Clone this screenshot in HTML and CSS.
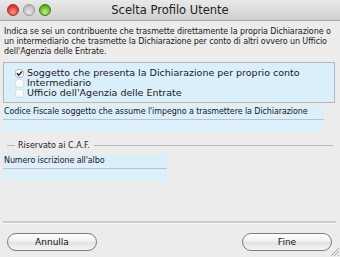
FILE: index.html
```html
<!DOCTYPE html>
<html>
<head>
<meta charset="utf-8">
<link rel="stylesheet" href="styles.css">
</head>
<body>
<div class="window">
  <div class="titlebar">
    <div class="lights">
      <span class="light red"></span>
      <span class="light gray"></span>
      <span class="light green"></span>
    </div>
    <div class="title">Scelta Profilo Utente</div>
  </div>
  <div class="content">
    <p class="intro">Indica se sei un contribuente che trasmette direttamente la propria Dichiarazione o un intermediario che trasmette la Dichiarazione per conto di altri ovvero un Ufficio dell'Agenzia delle Entrate.</p>
    <div class="radio-box">
      <div class="radio-row"><span class="radio checked"><svg viewBox="0 0 10 10" width="9" height="9"><path d="M2.2 4.8 L4.2 7 L7.8 2.6" fill="none" stroke="#222" stroke-width="1.5"/></svg></span>Soggetto che presenta la Dichiarazione per proprio conto</div>
      <div class="radio-row"><span class="radio"></span>Intermediario</div>
      <div class="radio-row"><span class="radio"></span>Ufficio dell'Agenzia delle Entrate</div>
    </div>
    <div class="field wide">
      <div class="label">Codice Fiscale soggetto che assume l'impegno a trasmettere la Dichiarazione</div>
      <div class="input"></div>
    </div>
    <div class="group-title"><span class="dash"></span><span class="gt-text">Riservato ai C.A.F.</span><span class="rule"></span></div>
    <div class="field narrow">
      <div class="label">Numero iscrizione all'albo</div>
      <div class="input"></div>
    </div>
  </div>
  <div class="footer">
    <div class="footer-line"></div>
    <div class="buttons">
      <button class="btn">Annulla</button>
      <button class="btn">Fine</button>
    </div>
    <div class="grip"></div>
  </div>
</div>
</body>
</html>
```
FILE: styles.css
```css
html, body {
  margin: 0;
  padding: 0;
}
body {
  width: 340px;
  height: 257px;
  overflow: hidden;
  font-family: "DejaVu Sans", "Liberation Sans", sans-serif;
  color: #1a1a1a;
}
.window {
  width: 340px;
  height: 257px;
  background: #ececec;
  display: flex;
  flex-direction: column;
  position: relative;
}
.titlebar {
  height: 21px;
  flex: none;
  background: linear-gradient(#e9e9e9, #cfcfcf);
  border-bottom: 1px solid #a8a8a8;
  display: flex;
  align-items: center;
  position: relative;
  box-sizing: border-box;
}
.lights {
  display: flex;
  gap: 4px;
  padding-left: 7px;
  position: absolute;
  left: 0;
  top: 4px;
}
.light {
  width: 12px;
  height: 12px;
  border-radius: 50%;
  box-sizing: border-box;
}
.red {
  background: radial-gradient(circle at 50% 70%, #f79a8f 0%, #e0453a 55%, #b42a22 100%);
  border: 1px solid #9e2f29;
}
.gray {
  background: radial-gradient(circle at 50% 70%, #e8e8e8 0%, #c4c4c4 60%, #a6a6a6 100%);
  border: 1px solid #999;
}
.green {
  background: radial-gradient(circle at 50% 70%, #c6f08f 0%, #6fbe2f 55%, #3f8d1a 100%);
  border: 1px solid #3b7d1f;
}
.title {
  flex: 1;
  text-align: center;
  font-size: 11.5px;
  color: #222;
  font-family: "DejaVu Sans", sans-serif;
}
.content {
  padding: 6px 4px 0 4px;
  display: flex;
  flex-direction: column;
}
.intro {
  margin: 0;
  font-size: 8px;
  line-height: 10px;
  letter-spacing: -0.1px;
}
.radio-box {
  margin-top: 5px;
  margin-right: 1px;
  margin-left: -1px;
  background: #dbeffb;
  border: 1px solid #aeb8c0;
  padding: 5px 0 4px 11px;
  font-size: 9.5px;
}
.radio-row {
  display: flex;
  align-items: center;
  height: 10px;
  line-height: 10px;
}
.radio {
  width: 9px;
  height: 9px;
  border-radius: 50%;
  background: radial-gradient(circle at 50% 35%, #ffffff 0%, #f2f4f6 60%, #d5dadf 100%);
  box-shadow: inset 0 0 0 0.5px #c7ced4;
  margin-right: 3px;
  display: flex;
  align-items: center;
  justify-content: center;
}
.radio.checked {
  background: radial-gradient(circle at 50% 35%, #ffffff 0%, #e4e8ea 70%, #b9c0c6 100%);
  box-shadow: inset 0 0 0 0.5px #8e969c;
}
.field {
  display: flex;
  flex-direction: column;
  margin-left: -1px;
}
.field.wide {
  margin-top: 3px;
  width: 321px;
}
.field.narrow {
  width: 164px;
  margin-top: 5px;
}
.label {
  background: #dbeffb;
  font-size: 8px;
  line-height: 12px;
  padding-left: 1px;
  white-space: nowrap;
  letter-spacing: -0.1px;
}
.input {
  height: 12px;
  margin-top: 1px;
  background: #dcf0fc;
  border-top: 1px solid #b6c3cc;
}
.group-title {
  display: flex;
  align-items: center;
  margin-top: 8px;
  height: 10px;
  font-size: 8px;
}
.dash {
  width: 8px;
  height: 1px;
  background: #b9b9b9;
  margin-left: 3px;
  margin-right: 3px;
}
.rule {
  flex: 1;
  height: 1px;
  background: #b9b9b9;
  margin-left: 4px;
  margin-right: 3px;
}
.footer {
  margin-top: auto;
  position: relative;
  padding-bottom: 6px;
}
.footer-line {
  height: 2px;
  margin: 0 4px 0 3px;
  background: #cdcdcd;
  border-bottom: 1px solid #f7f7f7;
}
.buttons {
  display: flex;
  justify-content: space-between;
  padding: 9px 8px 0 7px;
}
.btn {
  width: 90px;
  height: 18px;
  border-radius: 9px;
  border: 1px solid #7c7c7c;
  background: linear-gradient(#ffffff 0%, #f1f1f1 45%, #e2e2e2 55%, #f6f6f6 100%);
  font-family: "DejaVu Sans", sans-serif;
  font-size: 9px;
  color: #111;
  padding: 0;
  line-height: 16px;
}
.grip {
  position: absolute;
  right: 1px;
  bottom: 1px;
  width: 8px;
  height: 8px;
  background: linear-gradient(135deg, transparent 0 45%, #aaa 45% 52%, transparent 52% 68%, #aaa 68% 75%, transparent 75% 88%, #aaa 88% 95%, transparent 95%);
}
```
